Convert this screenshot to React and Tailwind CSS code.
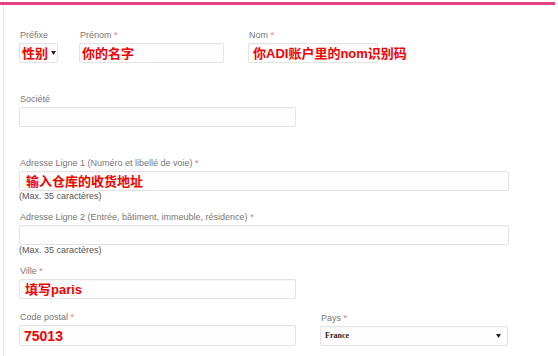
import React from 'react';

const Label = ({ text, required }) => (
  <div className="h-[12px] pl-[1px] text-[9px] leading-[12px] text-[#777] whitespace-nowrap">
    {text}
    {required && <span className="text-[#e8707a]"> *</span>}
  </div>
);

const Box = ({ className = '', children }) => (
  <div
    className={`mt-[2px] h-[20px] border border-[#e3e3e3] rounded-[2px] bg-[#fefefe] shadow-[inset_0_1px_1px_rgba(0,0,0,0.03)] flex items-center ${className}`}
  >
    {children}
  </div>
);

const Red = ({ children, className = '' }) => (
  <span className={`text-[13px] font-bold text-[#f20000] leading-none whitespace-nowrap ${className}`}>
    {children}
  </span>
);

const Caret = () => (
  <svg width="5" height="4" viewBox="0 0 5 4" className="shrink-0">
    <path d="M0 0 H5 L2.5 4 Z" fill="#222" />
  </svg>
);

const Hint = () => (
  <div className="h-[11px] text-[9px] leading-[11px] text-[#555]">(Max. 35 caractères)</div>
);

const App = () => {
  return (
    <div
      className="w-[558px] h-[356px] bg-white pt-[2px] overflow-hidden"
      style={{ fontFamily: '"Liberation Sans", "Noto Sans CJK SC", Arial, sans-serif' }}
    >
      <div className="h-[3px] w-[555px] bg-[#e4437f]" />
      <div className="ml-[3px] h-[351px] border-l border-[#e6e6e6] pl-[15px]">
        {/* Row 1 */}
        <div className="flex pt-[24px]">
          <div className="w-[39px]">
            <Label text="Préfixe" />
            <Box className="pl-[2px] gap-[3px]">
              <Red className="text-[11.5px]">性别</Red>
              <Caret />
            </Box>
          </div>
          <div className="w-[145px] ml-[21px]">
            <Label text="Prénom" required />
            <Box className="pl-[2px]">
              <Red>你的名字</Red>
            </Box>
          </div>
          <div className="w-[130px] ml-[24px]">
            <Label text="Nom" required />
            <Box className="pl-[4px] overflow-visible">
              <Red>你ADI账户里的nom识别码</Red>
            </Box>
          </div>
        </div>

        {/* Société */}
        <div className="w-[277px] mt-[30px]">
          <Label text="Société" />
          <Box />
        </div>

        {/* Adresse 1 */}
        <div className="w-[490px] mt-[30px]">
          <Label text="Adresse Ligne 1 (Numéro et libellé de voie)" required />
          <Box className="pl-[6px]">
            <Red>输入仓库的收货地址</Red>
          </Box>
          <Hint />
        </div>

        {/* Adresse 2 */}
        <div className="w-[490px] mt-[9px]">
          <Label text="Adresse Ligne 2 (Entrée, bâtiment, immeuble, résidence)" required />
          <Box />
          <Hint />
        </div>

        {/* Ville */}
        <div className="w-[277px] mt-[9px]">
          <Label text="Ville" required />
          <Box className="pl-[5px]">
            <Red>填写paris</Red>
          </Box>
        </div>

        {/* Code postal + Pays */}
        <div className="flex mt-[12px]">
          <div className="w-[277px]">
            <Label text="Code postal" required />
            <Box className="pl-[4px] h-[21px]">
              <Red className="text-[14px]">75013</Red>
            </Box>
          </div>
          <div className="w-[188px] ml-[24px] mt-[1px]">
            <Label text="Pays" required />
            <Box className="pl-[4px] pr-[6px] justify-between">
              <span
                className="text-[8px] text-[#222] font-bold leading-none"
                style={{ fontFamily: '"Liberation Serif", serif' }}
              >
                France
              </span>
              <Caret />
            </Box>
          </div>
        </div>
      </div>
    </div>
  );
};

export default App;
